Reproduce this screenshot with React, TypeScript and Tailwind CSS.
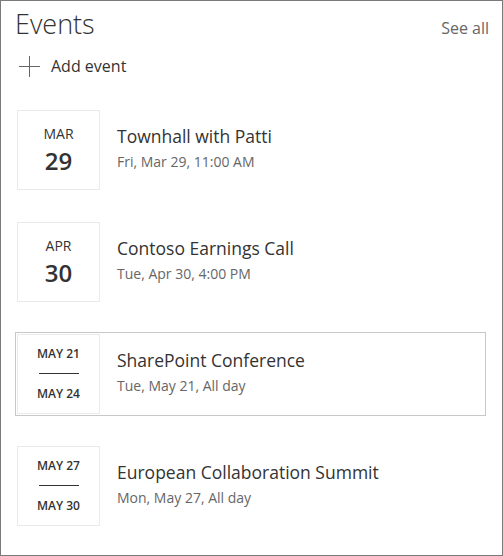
import React from "react";

type EventItem = {
  title: string;
  when: string;
  month?: string;
  day?: string;
  start?: string;
  end?: string;
  selected?: boolean;
};

const events: EventItem[] = [
  { title: "Townhall with Patti", when: "Fri, Mar 29, 11:00 AM", month: "MAR", day: "29" },
  { title: "Contoso Earnings Call", when: "Tue, Apr 30, 4:00 PM", month: "APR", day: "30" },
  { title: "SharePoint Conference", when: "Tue, May 21, All day", start: "MAY 21", end: "MAY 24", selected: true },
  { title: "European Collaboration Summit", when: "Mon, May 27, All day", start: "MAY 27", end: "MAY 30" },
];

function DateBox({ ev }: { ev: EventItem }) {
  return (
    <div className="w-[83px] h-[80px] shrink-0 border border-[#eaeaea] bg-white flex flex-col items-center justify-center text-[#333333]">
      {ev.month ? (
        <>
          <div className="text-[14px] leading-[18px]">{ev.month}</div>
          <div className="text-[24px] leading-[30px] font-semibold mt-[3px]">{ev.day}</div>
        </>
      ) : (
        <>
          <div className="text-[12px] leading-[16px] font-semibold">{ev.start}</div>
          <div className="w-[40px] h-px bg-[#333333] mt-[11px] mb-[12px]" />
          <div className="text-[12px] leading-[16px] font-semibold">{ev.end}</div>
        </>
      )}
    </div>
  );
}

export default function App() {
  return (
    <div
      className="w-[503px] h-[556px] bg-white border border-[#7a7a7a] overflow-hidden"
      style={{ fontFamily: '"Open Sans", "Noto Sans", sans-serif' }}
    >
      <div className="flex items-start justify-between pl-[14px] pr-[13px] pt-[5px]">
        <h2 className="text-[27px] leading-[36px] font-light text-[#333333]">Events</h2>
        <button className="text-[16px] leading-[22px] text-[#666666] mt-[11px]">See all</button>
      </div>

      <button className="flex items-center gap-[11px] ml-[18px] mt-[13px] text-[16px] leading-[22px] text-[#333333]">
        <svg width="21" height="21" viewBox="0 0 21 21" fill="none" stroke="#666666" strokeWidth="1">
          <path d="M10.5 0v21M0 10.5h21" />
        </svg>
        Add event
      </button>

      <div className="flex flex-col gap-[28px] mt-[31px] pl-[14px] pr-[16px]">
        {events.map((ev) => (
          <div
            key={ev.title}
            className={
              "flex items-center h-[84px] p-[1px] border " +
              (ev.selected ? "border-[#c8c8c8]" : "border-transparent")
            }
          >
            <DateBox ev={ev} />
            <div className="ml-[17px] mb-[4px] flex flex-col">
              <div className="text-[17.5px] leading-[24px] text-[#333333]">{ev.title}</div>
              <div className="text-[14px] leading-[20px] text-[#666666] mt-[4px]">{ev.when}</div>
            </div>
          </div>
        ))}
      </div>
    </div>
  );
}
